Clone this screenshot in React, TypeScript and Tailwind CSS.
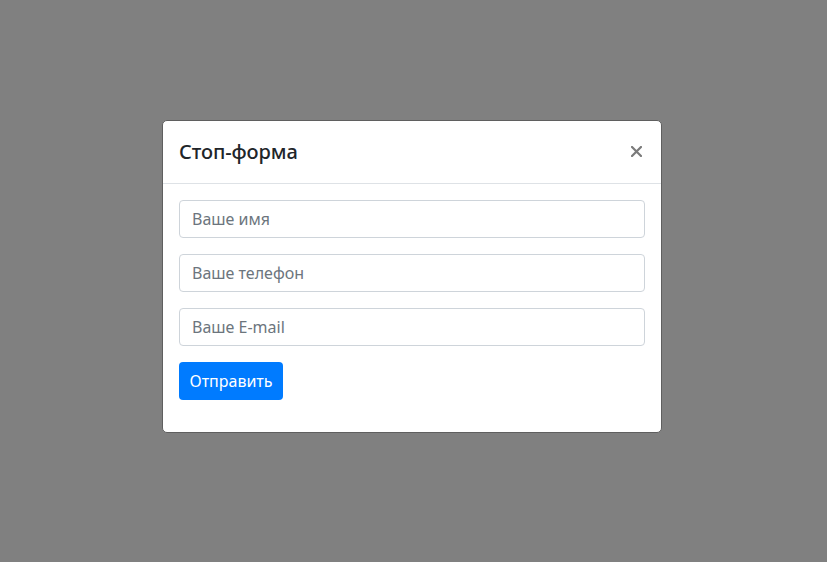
import React from "react";

export default function App() {
  const font = { fontFamily: '"Noto Sans", "Open Sans", sans-serif' };
  return (
    <div className="min-h-[562px] w-full bg-[#808080] pl-[162px] pt-[120px]" style={font}>
      <div className="w-[500px] bg-white border border-[#5f5f5f] rounded-[5px] flex flex-col">
        <div className="flex items-center justify-between pl-4 pr-[19px] h-[63px] border-b border-[#dee2e6]">
          <h5 className="text-[20px] leading-[30px] font-medium text-[#212529] tracking-[-0.1px]">Стоп-форма</h5>
          <button className="w-[11px] h-[11px] -mt-[2px] flex items-center justify-center">
            <svg width="11" height="11" viewBox="0 0 11 11">
              <path d="M1 1L10 10M10 1L1 10" stroke="#7a7a7a" strokeWidth="2.2" strokeLinecap="square" />
            </svg>
          </button>
        </div>
        <div className="px-4 pt-4 pb-[32px] flex flex-col gap-4">
          {["Ваше имя", "Ваше телефон", "Ваше E-mail"].map((p) => (
            <input
              key={p}
              placeholder={p}
              className="h-[38px] w-full border border-[#ced4da] rounded-[4px] px-3 text-[16px] text-[#495057] placeholder:text-[#6c757d] outline-none"
              style={font}
            />
          ))}
          <div>
            <button className="h-[38px] w-[104px] bg-[#007bff] text-white rounded-[4px] text-[16px]" style={font}>
              Отправить
            </button>
          </div>
        </div>
      </div>
    </div>
  );
}
